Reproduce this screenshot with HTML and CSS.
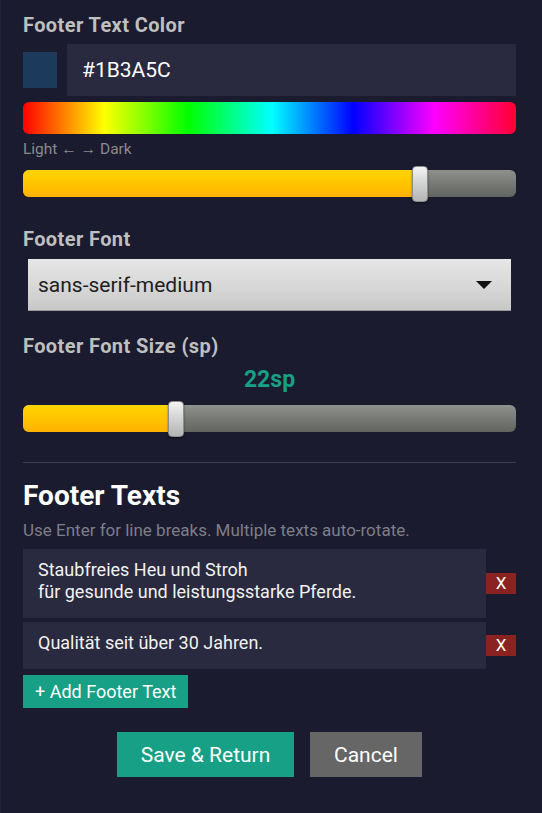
FILE: index.html
```html
<!DOCTYPE html>
<html lang="de">
<head>
<meta charset="utf-8">
<title>Footer Settings</title>
<link rel="stylesheet" href="styles.css">
</head>
<body>
<main class="panel">
  <div class="label label-first">Footer Text Color</div>
  <div class="color-row">
    <div class="swatch"></div>
    <div class="hex-input">#1B3A5C</div>
  </div>
  <div class="rainbow"></div>
  <div class="hint-small">Light ← → Dark</div>
  <div class="slider slider-shade">
    <div class="fill" style="width: 80.7%"></div>
    <div class="thumb" style="left: 389px"></div>
  </div>

  <div class="label label-font">Footer Font</div>
  <div class="dropdown">
    <span class="dropdown-text">sans-serif-medium</span>
    <span class="caret"></span>
  </div>

  <div class="label label-size">Footer Font Size (sp)</div>
  <div class="size-value">22sp</div>
  <div class="slider slider-size">
    <div class="fill" style="width: 31.1%"></div>
    <div class="thumb" style="left: 145px"></div>
  </div>

  <hr class="divider">

  <h2 class="section-title">Footer Texts</h2>
  <p class="section-hint">Use Enter for line breaks. Multiple texts auto-rotate.</p>

  <div class="text-list">
    <div class="text-row">
      <div class="text-card">Staubfreies Heu und Stroh<br>für gesunde und leistungsstarke Pferde.</div>
      <button class="remove-btn">X</button>
    </div>
    <div class="text-row">
      <div class="text-card">Qualität seit über 30 Jahren.</div>
      <button class="remove-btn">X</button>
    </div>
  </div>

  <button class="add-btn">+ Add Footer Text</button>

  <div class="actions">
    <button class="btn btn-save">Save &amp; Return</button>
    <button class="btn btn-cancel">Cancel</button>
  </div>
</main>
</body>
</html>
```

FILE: styles.css
```css
* { box-sizing: border-box; }

html, body {
  margin: 0;
  padding: 0;
  background: #1a1b2e;
  height: 100%;
}

body {
  font-family: Roboto, "Noto Sans", "Liberation Sans", sans-serif;
  color: #ffffff;
  border-left: 1px solid #22233a;
}

.panel {
  padding: 14px 26px 0 22px;
  display: flex;
  flex-direction: column;
}

.label {
  font-size: 20px;
  line-height: 22px;
  font-weight: 700;
  letter-spacing: 0.4px;
  color: #bfbfbf;
}

.color-row {
  margin-top: 8px;
  display: flex;
  align-items: center;
  gap: 10px;
  height: 52px;
}

.swatch {
  width: 34px;
  height: 36px;
  background: #1b3a5c;
  flex: none;
}

.hex-input {
  flex: 1;
  height: 52px;
  background: #292a3f;
  font-size: 21px;
  line-height: 52px;
  padding-left: 15px;
  color: #ffffff;
}

.rainbow {
  margin-top: 6px;
  height: 32px;
  border-radius: 6px;
  background: linear-gradient(to right,
    #ff0000 0%, #ffff00 16.5%, #00ff00 33.5%, #00ffff 50.5%,
    #0000ff 67%, #ff00ff 83.5%, #ff0033 100%);
}

.hint-small {
  margin-top: 6px;
  font-size: 15.5px;
  line-height: 18px;
  color: #8a8a8a;
}

.slider {
  position: relative;
  height: 27px;
  border-radius: 6px;
  background: linear-gradient(to bottom, #8f918d 0%, #7a7c77 45%, #62645f 100%);
}

.slider-shade { margin-top: 12px; }
.slider-size { margin-top: 11px; }

.fill {
  height: 100%;
  border-radius: 6px 0 0 6px;
  background: linear-gradient(to bottom, #ffd500 0%, #ffc400 50%, #ffb300 100%);
}

.thumb {
  position: absolute;
  top: -4px;
  width: 16px;
  height: 36px;
  border-radius: 4px;
  border: 1px solid #8c8c8c;
  background: linear-gradient(to bottom, #f4f4f4 0%, #d8d8d8 40%, #b4b4b4 100%);
  box-shadow: 0 1px 2px rgba(0, 0, 0, 0.5);
}

.label-font { margin-top: 31px; }

.dropdown {
  margin: 9px 5px 0 5px;
  height: 52px;
  background: linear-gradient(to bottom, #e6e6e6 0%, #d6d6d6 60%, #c8c8c8 100%);
  display: flex;
  align-items: center;
  justify-content: space-between;
  padding: 0 19px 0 10px;
  border-bottom: 1px solid #9a9a9a;
}

.dropdown-text {
  font-size: 21px;
  color: #202020;
}

.caret {
  width: 0;
  height: 0;
  border-left: 8px solid transparent;
  border-right: 8px solid transparent;
  border-top: 8px solid #111111;
}

.label-size { margin-top: 24px; }

.size-value {
  margin-top: 9px;
  font-size: 23px;
  line-height: 28px;
  font-weight: 700;
  color: #17a085;
  text-align: center;
}

.divider {
  margin: 30px 0 0 0;
  border: none;
  height: 1px;
  background: #3d3e52;
}

.section-title {
  margin: 18px 0 0 0;
  font-size: 28px;
  line-height: 30px;
  font-weight: 700;
  color: #ffffff;
}

.section-hint {
  margin: 10px 0 0 0;
  font-size: 17px;
  line-height: 18px;
  color: #7e7e88;
}

.text-list {
  margin-top: 10px;
  display: flex;
  flex-direction: column;
  gap: 4px;
}

.text-row {
  display: flex;
  align-items: center;
}

.text-card {
  flex: 1;
  background: #292a3f;
  font-size: 18px;
  line-height: 22px;
  padding: 10px 14px 15px 15px;
  color: #f2f2f2;
}

.remove-btn {
  flex: none;
  width: 30px;
  height: 21px;
  border: none;
  padding: 0;
  background: #8b2222;
  color: #ffffff;
  font-family: inherit;
  font-size: 17px;
  line-height: 21px;
}

.add-btn {
  align-self: flex-start;
  margin-top: 6px;
  height: 33px;
  padding: 0 12px;
  border: none;
  background: #17a085;
  color: #ffffff;
  font-family: inherit;
  font-size: 18px;
}

.actions {
  margin-top: 24px;
  display: flex;
  justify-content: center;
  gap: 16px;
}

.btn {
  height: 45px;
  border: none;
  font-family: inherit;
  font-size: 21px;
  color: #ffffff;
}

.btn-save {
  width: 177px;
  background: #17a085;
}

.btn-cancel {
  width: 112px;
  background: #666666;
}
```
